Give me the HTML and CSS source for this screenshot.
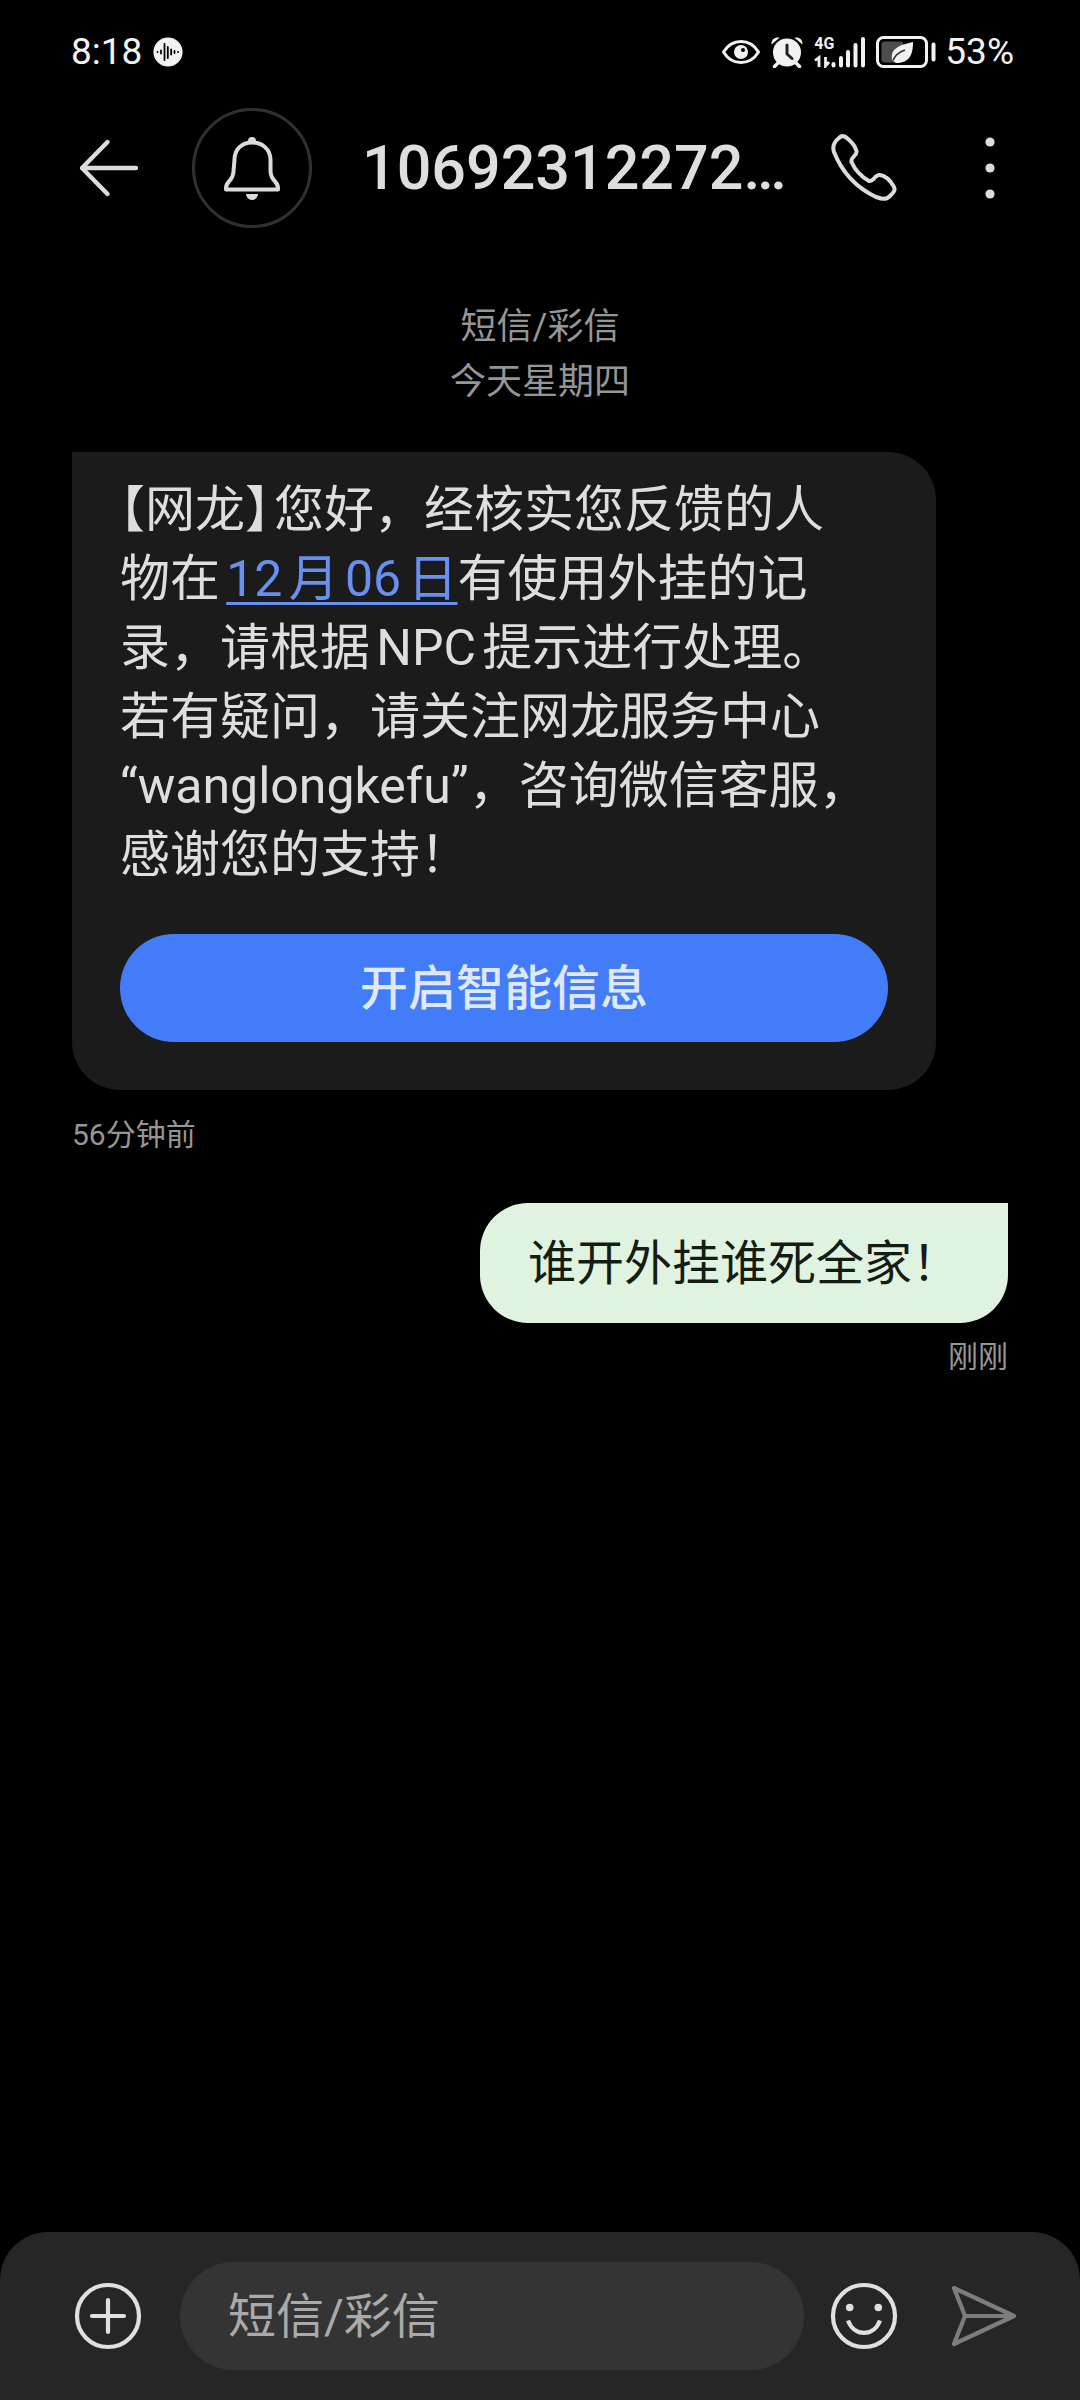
FILE: index.html
```html
<!DOCTYPE html>
<html lang="zh-CN">
<head>
<meta charset="utf-8">
<meta name="viewport" content="width=device-width, initial-scale=1">
<title>短信</title>
<link rel="stylesheet" href="styles.css">
</head>
<body>
<div class="status-bar">
  <div class="status-left">
    <span>8:18</span>
    <svg class="voice-icon" width="30" height="30" viewBox="0 0 30 30">
      <circle cx="15" cy="15" r="14.6" fill="#f2f2f2"/>
      <path d="M4.500 15h.1M8 13.500v3M11.500 7v16M14.800 10v11M18.200 12.500v5M21.500 14v2M25 15h.1" stroke="#000" stroke-width="1.800" stroke-linecap="round"/>
    </svg>
  </div>
  <div class="status-right">
    <svg width="38" height="32" viewBox="0 0 38 32" fill="none" stroke="#f2f2f2">
      <path d="M1.500 16C10 2 28 2 36.500 16C28 30 10 30 1.500 16Z" stroke-width="3"/>
      <circle cx="19" cy="16" r="7" fill="#f2f2f2" stroke="none"/>
      <circle cx="21" cy="14" r="2" fill="#000" stroke="none"/>
    </svg>
    <svg width="32" height="32" viewBox="0 0 32 32" fill="none">
      <path d="M.5 8.500C0 3 5 .5 8.500 1.800ZM31.500 8.500C32 3 27 .5 23.500 1.800Z" fill="#f2f2f2"/>
      <path d="M7 27L3.500 30.500M25 27L28.500 30.500" stroke="#f2f2f2" stroke-width="3.500" stroke-linecap="round"/>
      <circle cx="16" cy="16.500" r="14" fill="#f2f2f2"/>
      <path d="M16 9v9l5 4.500" stroke="#222" stroke-width="3" stroke-linecap="round" stroke-linejoin="round"/>
    </svg>
    <div class="signal">
      <span class="network">4G</span>
      <svg width="51" height="32" viewBox="0 0 51 32" fill="none" stroke="#f2f2f2">
        <path d="M1 24.500l4-3V31M11.500 21v9l3.500-4" stroke-width="2.800"/>
        <path d="M19.500 28v1.500M27 22v7.500M34 16v13.500M41.500 9v20.500M49 3v26.500" stroke-width="4" stroke-linecap="round"/>
      </svg>
    </div>
    <div class="battery">
      <svg width="60" height="32" viewBox="0 0 60 32" fill="none">
        <rect x="1.500" y="1.500" width="49" height="29" rx="6" stroke="#f2f2f2" stroke-width="3"/>
        <rect x="5.500" y="5.500" width="22" height="21" rx="3" fill="#4d4d4d"/>
        <path d="M57.500 8.500v15" stroke="#f2f2f2" stroke-width="4" stroke-linecap="round"/>
        <path d="M37 6C24 9 14 12 16 24L20 27C34 27 37 18 37 6Z" fill="#f2f2f2"/>
        <path d="M17 24.500Q20 17 29 14" stroke="#333" stroke-width="1.600"/>
      </svg>
      <span>53%</span>
    </div>
  </div>
</div>

<header class="app-bar">
  <button class="icon-button back" type="button" aria-label="返回">
    <svg width="72" height="72" viewBox="0 0 72 72" fill="none" stroke="#dcdcdc" stroke-width="4.400" stroke-linecap="round" stroke-linejoin="round"><path d="M64 36H10M35.500 10L10 36L35.500 62"/></svg>
  </button>
  <button class="icon-button avatar" type="button" aria-label="通知">
    <svg width="72" height="72" viewBox="0 0 72 72" fill="none">
      <path d="M18.500 28C18.500 17 26 10.500 36 10.500S54.500 17 54.500 28V39C54.500 49 62 49 62 56V57.500H10V56C10 49 17.500 49 17.500 39Z" stroke="#dcdcdc" stroke-width="4" stroke-linejoin="round"/>
      <path d="M32 9a4 4 0 0 1 8 0ZM30 62h12a6 6 0 0 1-12 0Z" fill="#dcdcdc"/>
    </svg>
  </button>
  <h1 class="title">10692312272…</h1>
  <button class="icon-button" type="button" aria-label="拨打电话">
    <svg width="72" height="72" viewBox="0 0 72 72" fill="none" stroke="#dcdcdc" stroke-width="4" stroke-linejoin="round"><path d="M11 6C14 3 17 4 20 7C25 11 27 14 28.500 19C29.500 24 22 25 23.500 30C27 38 34 45 41 49C46 50 47 42 52 43C58 44 62 48 65.500 54C68 58 66 60 62 64C58 68 54 67 48 65C29 56 14 40 6 20C4 14 6 10 11 6Z"/></svg>
  </button>
  <button class="icon-button more" type="button" aria-label="更多">
    <svg width="72" height="72" viewBox="0 0 72 72" fill="#dcdcdc"><circle cx="36" cy="10" r="4.600"/><circle cx="36" cy="36" r="4.600"/><circle cx="36" cy="62" r="4.600"/></svg>
  </button>
</header>

<main class="thread">
  <div class="thread-label">短信/彩信<br>今天星期四</div>
  <article class="bubble received">
    <p class="message"><span class="half">【</span>网龙<span class="half close">】</span>您好，经核实您反馈的人<br>物在<a class="date" href="#">12月06日</a>有使用外挂的记<br>录，请根据NPC提示进行处理。<br>若有疑问，请关注网龙服务中心<br>“wanglongkefu”，咨询微信客服，<br>感谢您的支持！</p>
    <button class="action" type="button">开启智能信息</button>
  </article>
  <time class="time">56分钟前</time>
  <article class="bubble sent">谁开外挂谁死全家！</article>
  <time class="time time-sent">刚刚</time>
</main>

<footer class="composer">
  <button class="icon-button" type="button" aria-label="添加">
    <svg width="72" height="72" viewBox="0 0 72 72" fill="none" stroke="#e0e0e0" stroke-width="4.200" stroke-linecap="round"><circle cx="36" cy="36" r="31"/><path d="M36 20v32M20 36h32"/></svg>
  </button>
  <input class="field" type="text" placeholder="短信/彩信" aria-label="短信/彩信">
  <button class="icon-button" type="button" aria-label="表情">
    <svg width="72" height="72" viewBox="0 0 72 72" fill="none" stroke="#e0e0e0" stroke-width="4.200"><circle cx="36" cy="36" r="31"/><path d="M20 40.500C26 57 46 57 52 40.500"/><circle cx="21.700" cy="27.500" r="3.800" fill="#e0e0e0" stroke="none"/><circle cx="50.300" cy="27.500" r="3.800" fill="#e0e0e0" stroke="none"/></svg>
  </button>
  <button class="icon-button send" type="button" aria-label="发送">
    <svg width="72" height="72" viewBox="0 0 72 72" fill="none" stroke="#7d7d7d" stroke-width="4.200" stroke-linecap="round" stroke-linejoin="round"><path d="M6 8L66 36L6 64L17 36ZM17 36H64"/></svg>
  </button>
</footer>
</body>
</html>
```

FILE: styles.css
```css
* {
  box-sizing: border-box;
}

body {
  display: flex;
  flex-direction: column;
  min-height: 100vh;
  margin: 0;
  background: #000;
  color: #dedede;
  font-family: Roboto, "Noto Sans CJK SC", sans-serif;
}

button,
input {
  border: 0;
  margin: 0;
  padding: 0;
  background: none;
  color: inherit;
  font: inherit;
}

svg {
  display: block;
}

.status-bar {
  display: flex;
  justify-content: space-between;
  align-items: center;
  height: 104px;
  padding: 0 66px 0 71px;
  color: #f2f2f2;
  font-size: 37px;
  line-height: 40px;
}

.status-left,
.status-right,
.battery {
  display: flex;
  align-items: center;
}

.status-left,
.status-right {
  gap: 11px;
}

.battery {
  gap: 9px;
}

.signal {
  position: relative;
}

.network {
  position: absolute;
  top: 0;
  left: 0;
  font-size: 16px;
  font-weight: 700;
  line-height: 16px;
}

.app-bar {
  display: flex;
  align-items: center;
  height: 128px;
  padding: 0 54px 0 72px;
}

.icon-button {
  display: grid;
  flex: none;
  place-items: center;
  width: 72px;
  height: 72px;
}

.back {
  margin-right: 48px;
}

.avatar {
  width: 120px;
  height: 120px;
  border: 3px solid #303030;
  border-radius: 50%;
}

.title {
  flex: 1;
  min-width: 0;
  margin: 0 24px 0 50px;
  overflow: hidden;
  font-size: 61px;
  font-weight: 500;
  line-height: 76px;
  white-space: nowrap;
  text-overflow: ellipsis;
}

.more {
  margin-left: 54px;
}

.thread {
  display: flex;
  flex: 1;
  flex-direction: column;
  align-items: flex-start;
  padding: 68px 72px;
}

.thread-label {
  align-self: center;
  margin-bottom: 42px;
  color: #969696;
  font-size: 36px;
  line-height: 55px;
  text-align: center;
}

.received {
  width: 100%;
  max-width: 864px;
  padding: 24px 48px 48px;
  border-radius: 0 48px 48px 48px;
  background: #1b1b1b;
}

.message {
  margin: 0 0 44px;
  font-size: 50px;
  line-height: 69px;
  text-autospace: normal;
}

.half {
  font-feature-settings: "halt";
}

.close {
  margin-right: 4px;
}

.date {
  color: #6790f0;
  text-decoration-thickness: 3px;
  text-underline-offset: 6px;
}

.action {
  display: block;
  width: 100%;
  height: 108px;
  padding-bottom: 8px;
  border-radius: 54px;
  background: #427cf9;
  color: #e0e8fb;
  font-size: 48px;
  font-weight: 500;
}

.time {
  margin-top: 25px;
  color: #969696;
  font-size: 30px;
  line-height: 40px;
}

.sent {
  align-self: flex-end;
  margin-top: 48px;
  padding: 25px 48px 23px;
  border-radius: 48px 0 48px 48px;
  background: #dff3e0;
  color: #141c14;
  font-size: 48px;
  line-height: 72px;
}

.time-sent {
  align-self: flex-end;
  margin-top: 14px;
}

.composer {
  display: flex;
  align-items: center;
  padding: 30px 60px 30px 72px;
  border-radius: 48px 48px 0 0;
  background: #262626;
}

.field {
  flex: 1;
  min-width: 0;
  height: 108px;
  margin: 0 24px 0 36px;
  padding: 0 48px;
  border-radius: 54px;
  background: #343434;
  font-size: 48px;
}

.field::placeholder {
  color: #aaa;
  opacity: 1;
}

.send {
  margin-left: 48px;
}
```
